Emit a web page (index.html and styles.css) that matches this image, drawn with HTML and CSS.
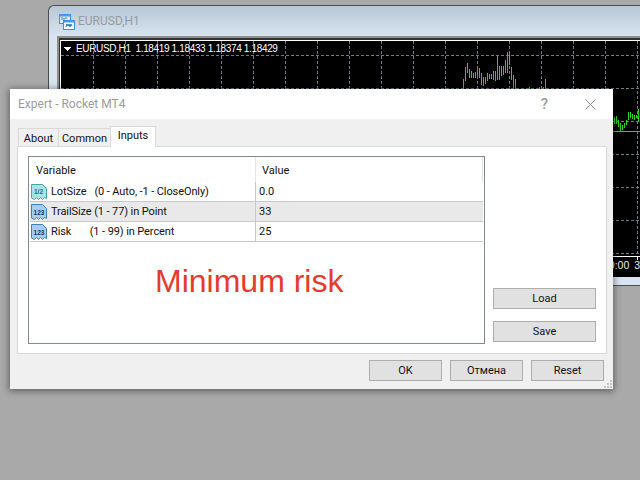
FILE: index.html
```html
<!DOCTYPE html>
<html lang="en">
<head>
<meta charset="utf-8">
<title>Expert - Rocket MT4</title>
<link rel="stylesheet" href="styles.css">
</head>
<body>
<section class="chart-window">
  <header class="chart-title">
    <svg class="chart-icon" width="16" height="16" viewBox="0 0 16 16">
      <rect x="0.5" y="0.5" width="11" height="9" fill="#dcecfb" stroke="#3f8ee0"/>
      <rect x="0.5" y="0.5" width="11" height="2" fill="#4f9ae6"/>
      <rect x="4.5" y="6.5" width="11" height="9" fill="#f2f8fe" stroke="#3f8ee0"/>
      <rect x="4.5" y="6.5" width="11" height="2" fill="#4f9ae6"/>
      <path d="M3 6V3M5 7V4M7 5V3M7 13l1-3 1 2 1-2 1 3 1-3 1 2" fill="none" stroke="#2d74c4"/>
    </svg>
    <span>EURUSD,H1</span>
  </header>
  <div class="chart-frame">
    <div class="chart-inner">
      <div class="chart-plot">
        <svg class="chart-svg" width="579" height="219" viewBox="61 41 579 219" shape-rendering="crispEdges">
          <path class="grid" d="M61 55.5H640M61 88.5H640M61 121.5H640M61 154.5H640M61 187.5H640M61 220.5H640M61 253.5H640"/>
          <path class="grid" d="M93.5 41V256M125.5 41V256M157.5 41V256M189.5 41V256M221.5 41V256M253.5 41V256M285.5 41V256M317.5 41V256M349.5 41V256M381.5 41V256M413.5 41V256M445.5 41V256M477.5 41V256M509.5 41V256M541.5 41V256M573.5 41V256M605.5 41V256M637.5 41V256"/>
          <path class="level" d="M600 131.5H640"/>
          <path class="bars" d="M463.5 79V89M465.5 67V81M467.5 63V73M469.5 69V78M471.5 71V78M473.5 73V78M475.5 72V78M477.5 68V76M479.5 68V78M481.5 73V85M483.5 77V86M485.5 77V84M487.5 73V81M489.5 74V79M491.5 74V79M493.5 71V80M495.5 71V81M497.5 56V80M499.5 66V80M501.5 66V76M503.5 66V75M505.5 60V73M507.5 52V73M509.5 52V65M511.5 67V80M513.5 75V88M515.5 79V89M529.5 87V89M539.5 87V89M541.5 86V89M543.5 87V89M545.5 79V89M614.5 117V124M616.5 116V124M618.5 120V127M620.5 123V131M622.5 125V130M624.5 123V128M626.5 120V125M628.5 112V120M630.5 112V118M632.5 114V119M634.5 115V120M636.5 115V118M638.5 109V122"/>
          <path class="axis" d="M61 256.5H640M637.5 257V260"/>
          <path class="marker" d="M63 47H72L67.5 51Z"/>
          <text class="quote" x="76" y="52" xml:space="preserve">EURUSD,H1  1.18419 1.18433 1.18374 1.18429</text>
        </svg>
      </div>
      <div class="chart-axis"><span>10:00</span><span>3</span></div>
    </div>
  </div>
</section>

<section class="dialog">
  <header class="dialog-title">
    <span class="dialog-name">Expert - Rocket MT4</span>
    <span class="help">?</span>
    <svg class="close" width="11" height="11" viewBox="0 0 11 11"><path d="M0.5 0.5L10.5 10.5M10.5 0.5L0.5 10.5" stroke="#8a8a8a" fill="none"/></svg>
  </header>
  <div class="dialog-body">
    <nav class="tabs">
      <span class="tab tab-about">About</span>
      <span class="tab tab-common">Common</span>
      <span class="tab tab-active">Inputs</span>
    </nav>
    <div class="panel">
      <div class="table">
        <div class="row row-head">
          <div class="cell-name head-name">Variable</div>
          <div class="cell-value head-value">Value</div>
        </div>
        <div class="row">
          <div class="cell-name">
            <svg class="var-icon" width="16" height="16" viewBox="0 0 16 16">
              <path d="M0.5 0.5H11.5L15.5 4.5V14.5L13.5 13.5L11.5 15.5L9.5 13.5L7.5 15.5L5.5 13.5L3.5 15.5L0.5 14V0.5Z" fill="#a8e4e6" stroke="#3ea5ad"/>
              <text class="icon-text icon-frac" x="7.5" y="10">1/2</text>
            </svg>
            <span class="var-text">LotSize   (0 - Auto, -1 - CloseOnly)</span>
          </div>
          <div class="cell-value">0.0</div>
        </div>
        <div class="row row-alt">
          <div class="cell-name">
            <svg class="var-icon" width="16" height="16" viewBox="0 0 16 16">
              <path d="M0.5 0.5H11.5L15.5 4.5V14.5L13.5 13.5L11.5 15.5L9.5 13.5L7.5 15.5L5.5 13.5L3.5 15.5L0.5 14V0.5Z" fill="#a9cdf0" stroke="#3c7fc0"/>
              <text class="icon-text" x="8" y="11">123</text>
            </svg>
            <span class="var-text">TrailSize (1 - 77) in Point</span>
          </div>
          <div class="cell-value">33</div>
        </div>
        <div class="row">
          <div class="cell-name">
            <svg class="var-icon" width="16" height="16" viewBox="0 0 16 16">
              <path d="M0.5 0.5H11.5L15.5 4.5V14.5L13.5 13.5L11.5 15.5L9.5 13.5L7.5 15.5L5.5 13.5L3.5 15.5L0.5 14V0.5Z" fill="#a9cdf0" stroke="#3c7fc0"/>
              <text class="icon-text" x="8" y="11">123</text>
            </svg>
            <span class="var-text">Risk       (1 - 99) in Percent</span>
          </div>
          <div class="cell-value">25</div>
        </div>
        <p class="promo">Minimum risk</p>
      </div>
      <div class="side">
        <button class="btn btn-side" type="button">Load</button>
        <button class="btn btn-side" type="button">Save</button>
      </div>
    </div>
    <footer class="footer">
      <button class="btn btn-foot" type="button">OK</button>
      <button class="btn btn-foot" type="button">Отмена</button>
      <button class="btn btn-foot" type="button">Reset</button>
    </footer>
    <svg class="grip" width="8" height="8" viewBox="0 0 8 8" shape-rendering="crispEdges">
      <path d="M6 0h2v2H6zM3 3h2v2H3zM6 3h2v2H6zM0 6h2v2H0zM3 6h2v2H3zM6 6h2v2H6z" fill="#c4c4c4"/>
    </svg>
  </div>
</section>
</body>
</html>
```

FILE: styles.css
```css
* { box-sizing: border-box; }

html, body {
  margin: 0;
  height: 100%;
}

body {
  position: relative;
  width: 640px;
  height: 480px;
  overflow: hidden;
  background: #a9a9a9;
  font-family: "Roboto", "Liberation Sans", sans-serif;
  font-size: 11px;
  color: #111;
}

/* Chart window */
.chart-window {
  position: absolute;
  left: 48px;
  top: 5px;
  width: 592px;
  height: 281px;
  border: 1px solid #4d4d4d;
  border-right: 0;
  border-top-left-radius: 6px;
  background: linear-gradient(#b8c7d6 0, #d8e5f1 31px);
  display: flex;
  flex-direction: column;
}

.chart-title {
  height: 30px;
  display: flex;
  align-items: center;
  gap: 3px;
  padding: 0 0 0 10px;
  font-size: 12px;
  color: #9a9a9a;
}

.chart-icon { display: block; margin-top: 1px; }

.chart-frame {
  margin-left: 8px;
  height: 241px;
  border: solid #8f8f8f;
  border-width: 2px 0 0 2px;
}

.chart-inner {
  height: 100%;
  border: solid #333;
  border-width: 2px 0 0 1px;
  display: flex;
  flex-direction: column;
}

.chart-plot {
  border: solid #fff;
  border-width: 1px 0 0 1px;
  background: #000;
}

.chart-svg { display: block; }

.grid {
  fill: none;
  stroke: #6f7b8a;
  stroke-dasharray: 3 2;
}

.level { fill: none; stroke: #87929e; }
.bars { fill: none; stroke: #20d820; }
.axis { fill: none; stroke: #fff; }
.marker { fill: #fff; }

.quote {
  font-family: "Liberation Sans", sans-serif;
  font-size: 10px;
  letter-spacing: -0.35px;
  fill: #fff;
  white-space: pre;
}

.chart-axis {
  flex: 1;
  background: #000;
  color: #e6f0fa;
  font-family: "Liberation Sans", sans-serif;
  font-size: 10.5px;
  line-height: 11px;
  padding-left: 543px;
  display: flex;
  gap: 5px;
}

/* Dialog */
.dialog {
  position: absolute;
  left: 10px;
  top: 89px;
  width: 603px;
  height: 300px;
  background: #f0f0f0;
  box-shadow: 0 1px 7px 1px rgba(0, 0, 0, 0.45);
  display: flex;
  flex-direction: column;
}

.dialog-title {
  height: 30px;
  flex: none;
  background: #fff;
  display: flex;
  align-items: center;
  padding: 0 17px 0 8px;
  color: #9b9b9b;
}

.dialog-name { font-size: 12px; flex: 1; }

.help {
  font-size: 15px;
  font-weight: 500;
  margin-right: 37px;
}

.close { display: block; }

.dialog-body {
  position: relative;
  flex: 1;
  padding: 7px 6px 0 7px;
  display: flex;
  flex-direction: column;
}

.tabs {
  display: flex;
  align-items: flex-end;
  height: 20px;
  margin-left: 1px;
  flex: none;
}

.tab {
  height: 18px;
  border: 1px solid #d9d9d9;
  border-bottom: 0;
  border-left: 0;
  line-height: 19px;
  text-align: center;
}

.tab-about { width: 41px; border-left: 1px solid #d9d9d9; }
.tab-common { width: 52px; }

.tab-active {
  width: 46px;
  height: 21px;
  margin-bottom: -1px;
  margin-left: -1px;
  background: #fff;
  border-left: 1px solid #d9d9d9;
  line-height: 17px;
  position: relative;
  z-index: 1;
}

.panel {
  height: 208px;
  flex: none;
  border: 1px solid #d9d9d9;
  background: #fff;
  display: flex;
  padding: 9px 10px 9px 10px;
}

.table {
  width: 457px;
  flex: none;
  border: 1px solid #828790;
  padding: 0 1px;
}

.row {
  display: flex;
  height: 20px;
  border-bottom: 1px solid #c8c8c8;
}

.row-head {
  height: 25px;
  border-bottom: 0;
  border-right: 1px solid #e6e6e6;
}

.row-alt { background: #e9e9e9; }

.cell-name {
  width: 226px;
  flex: none;
  border-right: 1px solid #c8c8c8;
  display: flex;
  align-items: center;
  gap: 4px;
  padding-left: 1px;
}

.cell-value {
  flex: 1;
  padding-left: 3px;
  line-height: 19px;
}

.head-name {
  padding: 1px 0 0 6px;
  border-right-color: #e6e6e6;
}

.head-value {
  padding-left: 6px;
  line-height: 27px;
}

.var-icon { display: block; flex: none; }

.var-text {
  white-space: pre;
  letter-spacing: -0.1px;
}

.icon-text {
  font-family: "Liberation Sans", sans-serif;
  font-size: 6.5px;
  font-weight: 700;
  fill: #123a66;
  text-anchor: middle;
}

.icon-frac { fill: #1f6a70; }

.promo {
  margin: 17px 0 0;
  padding-left: 125px;
  font-family: "Liberation Sans", sans-serif;
  font-size: 32px;
  line-height: 44px;
  color: #e63a2e;
}

.side {
  flex: 1;
  display: flex;
  flex-direction: column;
  align-items: flex-end;
  justify-content: flex-end;
  gap: 12px;
  padding-bottom: 2px;
}

.btn {
  height: 21px;
  padding: 0;
  background: #e1e1e1;
  border: 1px solid #adadad;
  font: inherit;
  color: #111;
}

.btn-side { width: 103px; }
.btn-foot { width: 73px; }

.footer {
  display: flex;
  justify-content: flex-end;
  gap: 8px;
  margin-top: 6px;
  padding-right: 3px;
}

.grip {
  position: absolute;
  right: 1px;
  bottom: 1px;
}
```
